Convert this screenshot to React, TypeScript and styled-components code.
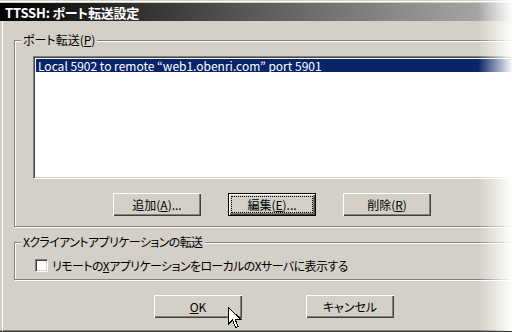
import React from "react";
import styled, { createGlobalStyle } from "styled-components";

const GlobalStyle = createGlobalStyle`
  html, body {
    margin: 0;
    padding: 0;
    background: #fff;
    overflow: hidden;
  }
  body {
    font-family: "Noto Sans CJK JP", "Liberation Sans", sans-serif;
    font-size: 12px;
    font-feature-settings: "palt";
  }
`;

const Window = styled.div`
  position: relative;
  width: 512px;
  height: 332px;
  box-sizing: border-box;
  overflow: hidden;
  background: linear-gradient(#d4d0c8 0 1px, #ffffff 1px 2px, #d4d0c8 2px);
  border-bottom: 1px solid #404040;
  box-shadow: inset 0 -1px #808080;
  display: flex;
  flex-direction: column;
  padding-top: 3px;
`;

const TitleBar = styled.div`
  height: 18px;
  display: flex;
  align-items: center;
  padding-left: 5px;
  background: linear-gradient(to right, #000000 0%, #5a5a5a 50%, #b0b0b0 100%);
  color: #fff;
  font-weight: bold;
  font-size: 13px;
  letter-spacing: -0.2px;
  flex-shrink: 0;
`;

const Body = styled.div`
  flex: 1;
  margin-left: 2px;
  border-left: 1px solid #fff;
  padding: 19px 0 0 11px;
  display: flex;
  flex-direction: column;
`;

const GroupBox = styled.div<{ $height: number }>`
  position: relative;
  width: 540px;
  height: ${(p) => p.$height}px;
  box-sizing: border-box;
  border: 1px solid #808080;
  box-shadow: inset 1px 1px #fff, 1px 1px #fff;
`;

const GroupLabel = styled.span<{ $tight?: boolean }>`
  position: absolute;
  top: -8px;
  left: 6px;
  padding: 0 2px;
  line-height: 14px;
  background: #d4d0c8;
  color: #000;
  letter-spacing: ${(p) => (p.$tight ? "-0.6px" : "0")};
`;

const ForwardGroup = styled(GroupBox)`
  padding: 15px 0 0 18px;
  display: flex;
  flex-direction: column;
`;

const ListBox = styled.div`
  width: 560px;
  height: 123px;
  box-sizing: border-box;
  background: #fff;
  border-style: solid;
  border-width: 1px;
  border-color: #808080 #fff #fff #808080;
  box-shadow: inset 1px 1px #404040, inset -1px -1px #d4d0c8;
  padding: 2px;
`;

const ListRow = styled.div<{ $selected?: boolean }>`
  height: 13px;
  line-height: 13px;
  padding-left: 2px;
  background: ${(p) => (p.$selected ? "#0a246a" : "transparent")};
  color: ${(p) => (p.$selected ? "#fff" : "#000")};
  white-space: nowrap;
  font-size: 12px;
`;

const ButtonRow = styled.div<{ $left: number; $gap: number }>`
  display: flex;
  gap: ${(p) => p.$gap}px;
  margin-left: ${(p) => p.$left}px;
`;

const ForwardButtons = styled(ButtonRow)`
  margin-top: 14px;
`;

const Button = styled.div<{ $default?: boolean }>`
  width: 88px;
  height: 23px;
  box-sizing: border-box;
  background: #d4d0c8;
  display: flex;
  align-items: center;
  justify-content: center;
  color: #000;
  font-size: 12px;
  border: ${(p) => (p.$default ? "1px solid #000" : "none")};
  box-shadow: inset 1px 1px #fff, inset -1px -1px #404040, inset -2px -2px #808080;
  padding: ${(p) => (p.$default ? "2px" : "0")};
`;

const FocusRect = styled.div`
  width: 100%;
  height: 100%;
  box-sizing: border-box;
  border: 1px dotted #000;
  display: flex;
  align-items: center;
  justify-content: center;
`;

const XGroup = styled(GroupBox)`
  margin-top: 15px;
  padding: 16px 0 0 20px;
`;

const CheckRow = styled.label`
  display: flex;
  align-items: center;
  gap: 4px;
  color: #000;
  line-height: 13px;
  letter-spacing: -0.6px;
`;

const CheckBox = styled.span`
  width: 13px;
  height: 13px;
  box-sizing: border-box;
  background: #fff;
  border-style: solid;
  border-width: 1px;
  border-color: #808080 #fff #fff #808080;
  box-shadow: inset 1px 1px #404040, inset -1px -1px #d4d0c8;
  flex-shrink: 0;
`;

const Footer = styled(ButtonRow)`
  margin-top: 15px;
`;

const Cursor = styled.svg`
  position: absolute;
  left: 228px;
  top: 307px;
`;

const Fade = styled.div`
  position: absolute;
  top: 0;
  right: 0;
  bottom: 0;
  width: 34px;
  background: linear-gradient(to right, rgba(255, 255, 255, 0), rgba(255, 255, 255, 0.97));
  pointer-events: none;
`;

export default function App() {
  return (
    <>
      <GlobalStyle />
      <Window>
        <TitleBar>TTSSH: ポート転送設定</TitleBar>
        <Body>
          <ForwardGroup $height={187}>
            <GroupLabel>
              ポート転送(<u>P</u>)
            </GroupLabel>
            <ListBox>
              <ListRow $selected>Local 5902 to remote “web1.obenri.com” port 5901</ListRow>
            </ListBox>
            <ForwardButtons $left={80} $gap={27}>
              <Button>
                追加(<u>A</u>)...
              </Button>
              <Button $default>
                <FocusRect>
                  編集(<u>E</u>)...
                </FocusRect>
              </Button>
              <Button>
                削除(<u>R</u>)
              </Button>
            </ForwardButtons>
          </ForwardGroup>

          <XGroup $height={38}>
            <GroupLabel $tight>Xクライアントアプリケーションの転送</GroupLabel>
            <CheckRow>
              <CheckBox />
              <span>
                リモートの<u>X</u>アプリケーションをローカルのXサーバに表示する
              </span>
            </CheckRow>
          </XGroup>

          <Footer $left={140} $gap={64}>
            <Button>
              <u>O</u>K
            </Button>
            <Button>キャンセル</Button>
          </Footer>
        </Body>
        <Cursor width="14" height="22" viewBox="0 0 14 22">
          <path
            d="M0.5 0.5 L0.5 17 L4.5 13 L7.5 20.5 L10 19.5 L7 12 L12.5 12 Z"
            fill="#fff"
            stroke="#000"
            strokeWidth="1"
            shapeRendering="crispEdges"
          />
        </Cursor>
        <Fade />
      </Window>
    </>
  );
}
